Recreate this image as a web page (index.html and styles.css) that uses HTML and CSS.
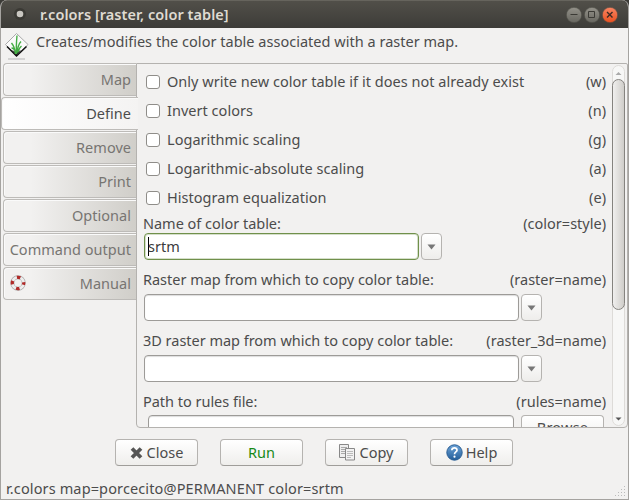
FILE: index.html
```html
<!DOCTYPE html>
<html lang="en">
<head>
<meta charset="utf-8">
<title>r.colors [raster, color table]</title>
<link rel="stylesheet" href="styles.css">
</head>
<body>
<div class="window">
  <header class="titlebar">
    <svg class="dot" width="14" height="14" viewBox="0 0 14 14"><circle cx="7" cy="7" r="6" fill="#3a3934"/><circle cx="7" cy="7" r="3.300" fill="#c9c7c1"/></svg>
    <h1>r.colors [raster, color table]</h1>
    <div class="controls">
      <svg width="16" height="16" viewBox="0 0 16 16"><defs><linearGradient id="g" x2="0" y2="1"><stop stop-color="#94928a"/><stop offset="1" stop-color="#67665f"/></linearGradient><linearGradient id="r" x2="0" y2="1"><stop stop-color="#f88563"/><stop offset="1" stop-color="#e9501f"/></linearGradient></defs><circle cx="8" cy="8" r="7.700" fill="url(#g)" stroke="#4a4943" stroke-width=".6"/><path d="M4.500 7.500h7" stroke="#3b3a35"/></svg>
      <svg width="16" height="16" viewBox="0 0 16 16"><circle cx="8" cy="8" r="7.700" fill="url(#g)" stroke="#4a4943" stroke-width=".6"/><path d="M4.500 4.500h6v6h-6z" fill="none" stroke="#3b3a35"/></svg>
      <svg width="16" height="16" viewBox="0 0 16 16"><circle cx="8" cy="8" r="7.700" fill="url(#r)" stroke="#4a4943" stroke-width=".6"/><path d="M5 5l5.500 5.500M10.500 5L5 10.500" stroke="#3b2a24" stroke-width="1.400"/></svg>
    </div>
  </header>
  <div class="intro">
    <svg width="26" height="28" viewBox="0 0 26 28"><path d="M5 27h17" stroke="#b5b5b5"/><path d="M13.500 1.500L25 12.500 13.500 24 2.500 12.500z" fill="#fafafa" stroke="#aaa"/><path d="M4 14.500L13.500 24l10-9.500" fill="none" stroke="#111" stroke-width="1.500"/><path d="M9 18l4.500 5.500L18 18l-3 1.500-1.500 1-1.500-1z" fill="#222"/><path d="M12.500 22C12 17 11 14 8.500 11M13.500 22C13 15 13.500 9 14 3.500M14 21C14.500 16 15.500 12 18 9.500M12.500 20C11.500 17 10 16 8.500 16M15 20c1-3 2-5 3.500-6" fill="none" stroke="#44ad44" stroke-width="1.400"/></svg>
    <p>Creates/modifies the color table associated with a raster map.</p>
  </div>
  <main class="notebook">
    <nav class="tabs">
      <div class="tab">Map</div>
      <div class="tab active">Define</div>
      <div class="tab">Remove</div>
      <div class="tab">Print</div>
      <div class="tab">Optional</div>
      <div class="tab">Command output</div>
      <div class="tab"><svg width="16" height="16" viewBox="0 0 16 16"><circle cx="8" cy="8" r="5.700" fill="none" stroke="#aaa" stroke-width="4"/><circle cx="8" cy="8" r="5.700" fill="none" stroke="#eee" stroke-width="2.600"/><circle cx="8" cy="8" r="5.700" fill="none" stroke="#b02a28" stroke-width="3.200" stroke-dasharray="3.600 5.353" stroke-dashoffset="1.800"/></svg><span>Manual</span></div>
    </nav>
    <section class="panel">
      <div class="form">
        <div class="check"><i></i><span>Only write new color table if it does not already exist</span><b>(w)</b></div>
        <div class="check"><i></i><span>Invert colors</span><b>(n)</b></div>
        <div class="check"><i></i><span>Logarithmic scaling</span><b>(g)</b></div>
        <div class="check"><i></i><span>Logarithmic-absolute scaling</span><b>(a)</b></div>
        <div class="check"><i></i><span>Histogram equalization</span><b>(e)</b></div>
        <div class="label first"><span>Name of color table:</span><b>(color=style)</b></div>
        <div class="combo"><div class="input short"><i class="caret"></i>srtm</div><div class="drop"><svg width="9" height="7" viewBox="0 0 9 7"><path d="M.5 1.500h8L4.500 6.500z" fill="#777"/></svg></div></div>
        <div class="label"><span>Raster map from which to copy color table:</span><b>(raster=name)</b></div>
        <div class="combo"><div class="input"></div><div class="drop"><svg width="9" height="7" viewBox="0 0 9 7"><path d="M.5 1.500h8L4.500 6.500z" fill="#777"/></svg></div></div>
        <div class="label"><span>3D raster map from which to copy color table:</span><b>(raster_3d=name)</b></div>
        <div class="combo"><div class="input"></div><div class="drop"><svg width="9" height="7" viewBox="0 0 9 7"><path d="M.5 1.500h8L4.500 6.500z" fill="#777"/></svg></div></div>
        <div class="label"><span>Path to rules file:</span><b>(rules=name)</b></div>
        <div class="file"><div class="input"></div><div class="button browse">Browse</div></div>
      </div>
      <div class="scroll">
        <svg class="up" width="11" height="13" viewBox="0 0 11 13"><path d="M2.500 9h6l-3-3z" fill="#aaa"/></svg>
        <div class="thumb"></div>
        <svg class="down" width="11" height="13" viewBox="0 0 11 13"><path d="M2.500 5.500h6l-3 3z" fill="#555"/></svg>
      </div>
    </section>
  </main>
  <div class="actions">
    <div class="button"><svg width="13" height="14" viewBox="0 0 13 14"><path d="M2 2.500l9 9M11 2.500l-9 9" stroke="#555" stroke-width="3.800"/></svg><span>Close</span></div>
    <div class="button run"><span>Run</span></div>
    <div class="button copy"><svg width="17" height="17" viewBox="0 0 17 17"><path d="M.5.500h9v13h-9z" fill="#eee" stroke="#888"/><path d="M2 3.500h6M2 5.500h6M2 7.500h4M2 9.500h4" stroke="#aaa"/><path d="M6.500 4.500h9v11.500h-9z" fill="#f2f2f2" stroke="#888"/><path d="M8 7.500h6M8 9.500h6M8 11.500h6M8 13.500h4" stroke="#bbb"/></svg><span>Copy</span></div>
    <div class="button help"><svg width="17" height="17" viewBox="0 0 17 17"><defs><linearGradient id="h" x2="0" y2="1"><stop stop-color="#6ea5d9"/><stop offset="1" stop-color="#225c98"/></linearGradient></defs><circle cx="8.500" cy="8.500" r="7.700" fill="url(#h)" stroke="#2a5e94"/><path d="M5.800 6.300C6 3.200 11.200 3.200 11 6.200 10.900 8 8.500 7.900 8.500 10.300" fill="none" stroke="#fff" stroke-width="1.700"/><circle cx="8.500" cy="12.700" r="1.100" fill="#fff"/></svg><span>Help</span></div>
  </div>
  <footer class="status"><span>r.colors map=porcecito@PERMANENT color=srtm</span>
    <svg width="12" height="12" viewBox="0 0 12 12"><path d="M10 0h1v1h-1zM7 3h1v1h-1zM10 3h1v1h-1zM4 6h1v1h-1zM7 6h1v1h-1zM10 6h1v1h-1zM1 9h1v1h-1zM4 9h1v1h-1zM7 9h1v1h-1zM10 9h1v1h-1z" fill="#bbb"/></svg>
  </footer>
</div>
</body>
</html>
```
FILE: styles.css
```css
* { box-sizing: border-box; }
html { background: #3c3b37; }
body { margin: 0; font: 14.500px/20px "Noto Sans", "Open Sans", sans-serif; color: #4c4c4c; letter-spacing: .03px; white-space: nowrap; }
svg { display: block; flex: none; }
b { font-weight: 400; margin-left: auto; letter-spacing: 0; }
.window { width: 629px; height: 500px; display: flex; flex-direction: column; background: #f2f1f0; border: 1px solid #a5a3a0; border-top: 0; border-radius: 7px 7px 0 0; overflow: hidden; }
.titlebar { height: 28px; flex: none; margin: 0 -1px; padding: 0 11px 2px 13px; display: flex; align-items: center; background: linear-gradient(#514f49, #3d3c38); border-top: 1px solid #66645d; }
.titlebar h1 { margin: 0 0 0 13px; font-size: 14.500px; font-weight: 600; line-height: 20px; color: #dfdbd2; letter-spacing: .05px; }
.controls { display: flex; gap: 2px; margin-left: auto; padding-top: 2px; }
.intro { height: 35px; flex: none; display: flex; padding: 4px 0 0 2px; }
.intro p { margin: -1px 0 0 7px; letter-spacing: .02px; }
.notebook { display: flex; height: 365px; flex: none; }
.tabs { width: 135px; display: flex; flex-direction: column; gap: 1px; padding-left: 2px; }
.tab { height: 33px; flex: none; padding: 0 5px 1px 6px; display: flex; align-items: center; justify-content: flex-end; color: #777572; border: 1px solid #bdbbb8; border-right: 0; border-radius: 4px 0 0 4px; background: linear-gradient(90deg, #f2f1f0 20%, #d0cec9); box-shadow: inset 1px 1px #fafafa; }
.tab span { margin-left: auto; }
.tab.active { margin: 0 -2px 0 -2px; padding-right: 7px; color: #4c4c4c; background: linear-gradient(90deg, #fff, #f4f3f2); position: relative; }
.panel { width: 492px; display: flex; border: 1px solid #b4b2af; border-radius: 0 2px 4px 4px; overflow: hidden; }
.form { width: 475px; padding: 3px 6px 0 6px; display: flex; flex-direction: column; }
.check { height: 29px; flex: none; display: flex; align-items: center; padding-left: 3px; }
.check span, .check b { margin-top: -1px; }
.check i { width: 14px; height: 14px; margin: 1px 7px 0 0; border: 1px solid #8f8d89; border-radius: 3px; background: #fff; }
.label { height: 20px; flex: none; display: flex; margin-top: 9px; letter-spacing: -.02px; }
.label.first { margin-top: 1px; }
.combo { display: flex; gap: 2px; height: 27px; flex: none; padding-left: 1px; }
.label:not(.first) + .combo { margin-top: 5px; }
.input { width: 375px; height: 27px; padding: 2px 4px 3px; display: flex; align-items: center; border: 1px solid #9d9b98; border-radius: 4px; background: #fff; box-shadow: inset 0 1px 1px #ddd; color: #3c3c3c; }
.input.short { width: 275px; padding-left: 3px; border-color: #70904b; box-shadow: inset 0 0 0 1px #d5dfca; }
.caret { width: 1px; height: 19px; margin-right: -1px; background: #000; }
.drop { width: 21px; height: 27px; display: flex; align-items: center; justify-content: center; border: 1px solid #b5b3b0; border-radius: 4px; background: linear-gradient(#fff, #eeedeb); }
.file { display: flex; flex: none; padding: 4px 0 0 5px; gap: 7px; }
.file .input { width: 366px; }
.button { width: 83px; height: 27px; display: flex; align-items: center; justify-content: center; gap: 4px; border: 1px solid #b5b3b0; border-bottom-color: #9f9d9a; border-radius: 4px; background: linear-gradient(#fff, #efeeec); }
.button span { margin-top: -1px; }
.browse { padding-bottom: 3px; letter-spacing: .2px; }
.copy, .help { gap: 3px; }
.scroll { width: 13px; margin: 1px 0; display: flex; flex-direction: column; border: 1px solid #dddbd8; border-radius: 7px; background: #f7f7f6; }
.thumb { width: 13px; height: 231px; flex: none; margin: 0 -1px; border: 1px solid #85837f; border-radius: 7px; background: linear-gradient(90deg, #f0efee, #cfcdc9); }
.down { margin-top: auto; }
.actions { display: flex; gap: 22px; margin: 11px 0 0 114px; }
.run { color: #168a16; }
.status { display: flex; padding: 0 0 1px 5px; margin-top: auto; align-items: end; justify-content: space-between; letter-spacing: .13px; }
.status svg { margin: 0 2px 0 0; }
```
